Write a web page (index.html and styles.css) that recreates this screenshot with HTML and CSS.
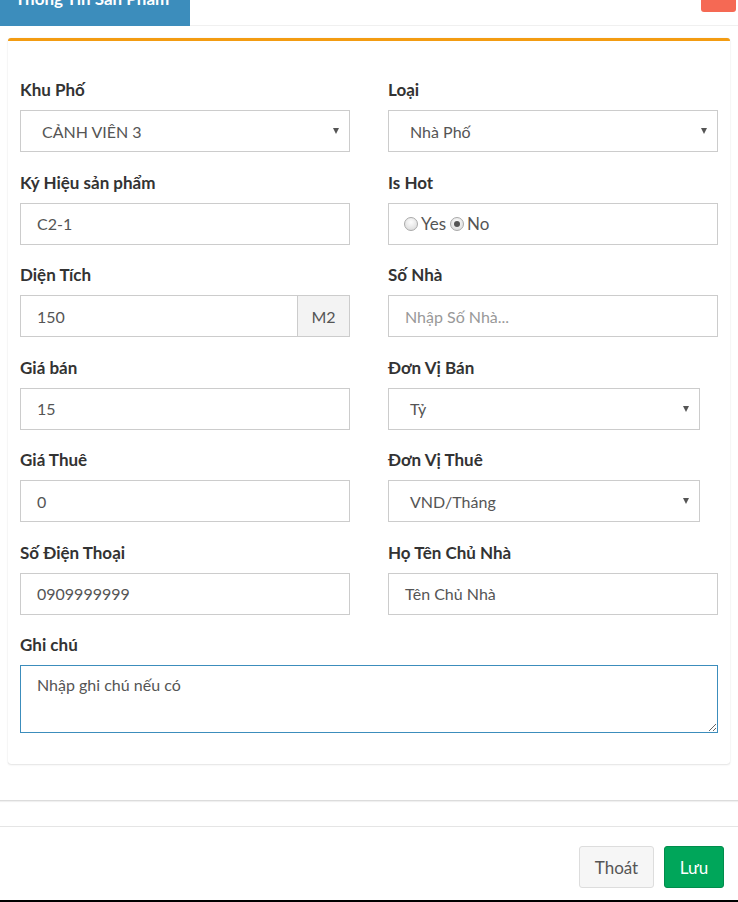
FILE: index.html
```html
<!DOCTYPE html>
<html lang="vi">
<head>
<meta charset="utf-8">
<title>Thông Tin Sản Phẩm</title>
<link rel="stylesheet" href="styles.css">
</head>
<body>
<div class="modal">
  <div class="header">
    <div class="tab">Thông Tin Sản Phẩm</div>
    <div class="header-rest"><span class="close"></span></div>
  </div>
  <div class="tab-pane">
    <div class="card">
      <div class="group">
        <div class="label">Khu Phố</div>
        <div class="field select"><span>CẢNH VIÊN 3</span><span class="arrow"></span></div>
      </div>
      <div class="group">
        <div class="label">Loại</div>
        <div class="field select"><span>Nhà Phố</span><span class="arrow"></span></div>
      </div>
      <div class="group">
        <div class="label">Ký Hiệu sản phẩm</div>
        <div class="field input">C2-1</div>
      </div>
      <div class="group">
        <div class="label">Is Hot</div>
        <div class="field radios">
          <span class="radio"></span><span class="radio-text">Yes</span>
          <span class="radio checked"></span><span class="radio-text">No</span>
        </div>
      </div>
      <div class="group">
        <div class="label">Diện Tích</div>
        <div class="input-group">
          <div class="field input grow">150</div>
          <div class="addon">M2</div>
        </div>
      </div>
      <div class="group">
        <div class="label">Số Nhà</div>
        <div class="field input placeholder">Nhập Số Nhà...</div>
      </div>
      <div class="group">
        <div class="label">Giá bán</div>
        <div class="field input">15</div>
      </div>
      <div class="group">
        <div class="label">Đơn Vị Bán</div>
        <div class="field select narrow"><span>Tỷ</span><span class="arrow"></span></div>
      </div>
      <div class="group">
        <div class="label">Giá Thuê</div>
        <div class="field input">0</div>
      </div>
      <div class="group">
        <div class="label">Đơn Vị Thuê</div>
        <div class="field select narrow"><span>VND/Tháng</span><span class="arrow"></span></div>
      </div>
      <div class="group">
        <div class="label">Số Điện Thoại</div>
        <div class="field input">0909999999</div>
      </div>
      <div class="group">
        <div class="label">Họ Tên Chủ Nhà</div>
        <div class="field input">Tên Chủ Nhà</div>
      </div>
      <div class="group wide last">
        <div class="label">Ghi chú</div>
        <textarea class="textarea">Nhập ghi chú nếu có</textarea>
      </div>
    </div>
  </div>
  <div class="footer">
    <button class="btn btn-default">Thoát</button>
    <button class="btn btn-success">Lưu</button>
  </div>
</div>
</body>
</html>
```

FILE: styles.css
```css
html, body {
  margin: 0;
  padding: 0;
  background: #fff;
}
body {
  width: 738px;
  height: 902px;
  overflow: hidden;
  font-family: "Lato", "Open Sans", sans-serif;
  color: #333;
}
.modal {
  width: 738px;
}
.header {
  display: flex;
  height: 26px;
}
.tab {
  width: 190px;
  box-sizing: border-box;
  background: #3c8dbc;
  color: #fff;
  font-weight: 700;
  font-size: 17px;
  line-height: 20px;
  padding: 0 15px 17px;
  display: flex;
  align-items: flex-end;
  overflow: hidden;
  white-space: nowrap;
}
.header-rest {
  flex: 1;
  border-bottom: 1px solid #f0f0f0;
  display: flex;
  justify-content: flex-end;
  align-items: flex-start;
}
.close {
  width: 35px;
  height: 12px;
  margin-right: 2px;
  background: #f56954;
  border-radius: 0 0 3px 3px;
}
.tab-pane {
  padding: 12px 0 36px;
  border-bottom: 1px solid #dcdcdc;
  box-shadow: 0 1px 1px rgba(0, 0, 0, 0.06);
}
.card {
  margin: 0 8px;
  border-top: 3px solid #f39c12;
  border-radius: 3px;
  background: #fff;
  box-shadow: 0 1px 2px rgba(0, 0, 0, 0.1), 0 0 1px rgba(0, 0, 0, 0.12);
  padding: 39px 12px 31px;
  display: grid;
  grid-template-columns: 330px 330px;
  column-gap: 38px;
}
.group {
  margin-bottom: 20.5px;
}
.group.wide {
  grid-column: 1 / span 2;
}
.group.last {
  margin-bottom: 0;
}
.label {
  font-weight: 700;
  font-size: 17px;
  line-height: 20px;
  margin-bottom: 10px;
  color: #333;
}
.field {
  box-sizing: border-box;
  height: 42px;
  border: 1px solid #ccc;
  font-size: 16px;
  color: #555;
  display: flex;
  align-items: center;
  background: #fff;
}
.input {
  padding: 0 16px;
}
.placeholder {
  color: #999;
}
.select {
  justify-content: space-between;
  padding: 0 10px 0 21px;
}
.select.narrow {
  width: 312px;
}
.arrow {
  width: 0;
  height: 0;
  border-left: 3px solid transparent;
  border-right: 3px solid transparent;
  border-top: 6px solid #555;
}
.input-group {
  display: flex;
}
.grow {
  flex: 1;
  border-right: 0;
}
.addon {
  box-sizing: border-box;
  width: 53px;
  height: 42px;
  border: 1px solid #ccc;
  background: #f3f3f3;
  color: #555;
  font-size: 16px;
  display: flex;
  align-items: center;
  justify-content: center;
}
.radios {
  padding: 0 15px;
  font-size: 17px;
}
.radio {
  box-sizing: border-box;
  width: 14px;
  height: 14px;
  border-radius: 50%;
  border: 1px solid #a9a9a9;
  background: radial-gradient(circle at 50% 35%, #fdfdfd 0%, #d6d6d6 100%);
  display: flex;
  align-items: center;
  justify-content: center;
}
.radio.checked::after {
  content: "";
  width: 6px;
  height: 6px;
  border-radius: 50%;
  background: #555;
}
.radio-text {
  margin: 0 4px 0 3px;
  color: #555;
}
.textarea {
  display: block;
  box-sizing: border-box;
  width: 100%;
  height: 68px;
  margin: 0;
  border: 1px solid #3c8dbc;
  border-radius: 0;
  padding: 8px 16px;
  font-family: "Lato", "Open Sans", sans-serif;
  font-size: 16px;
  line-height: 22px;
  color: #555;
  outline: none;
}
.footer {
  margin-top: 25px;
  border-top: 1px solid #e5e5e5;
  border-bottom: 2px solid #000;
  padding: 19px 14px 12px;
  display: flex;
  justify-content: flex-end;
  gap: 10px;
}
.btn {
  height: 42px;
  border-radius: 3px;
  font-family: "Lato", "Open Sans", sans-serif;
  font-size: 17px;
  padding: 0 12px;
  cursor: pointer;
}
.btn-default {
  width: 75px;
  background: #f6f6f6;
  border: 1px solid #ddd;
  color: #555;
}
.btn-success {
  width: 60px;
  background: #00a65a;
  border: 1px solid #008d4c;
  color: #fff;
}
```
